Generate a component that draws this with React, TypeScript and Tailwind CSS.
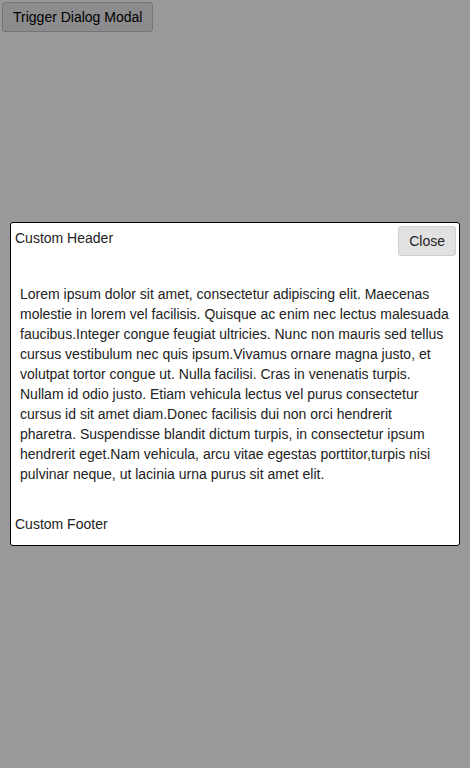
export default function App() {
  return (
    <div className="relative h-[768px] w-[470px] bg-white font-['Liberation_Sans',Arial,sans-serif] text-[14px] text-[#222]">
      <button className="m-[2px] h-[30px] rounded-[3px] border border-[#c4c4c4] bg-[#e9e9ed] px-[10px] text-[14px] text-black">
        Trigger Dialog Modal
      </button>

      {/* overlay */}
      <div className="fixed inset-0 flex items-center justify-center bg-black/40">
        <div className="flex w-[450px] flex-col rounded-[3px] border border-black bg-white">
          <div className="flex items-start justify-between pb-[4px] pl-[4px] pr-[3px] pt-[3px] leading-[20px]">
            <span className="pt-[2px]">Custom Header</span>
            <button className="h-[30px] rounded-[3px] border border-[#cfcfcf] bg-[#e1e1e1] px-[10px] text-[14px] text-[#222]">
              Close
            </button>
          </div>
          <p className="mt-[24px] px-[9px] text-[14px] leading-[20px]">
            Lorem ipsum dolor sit amet, consectetur adipiscing elit. Maecenas molestie in lorem vel facilisis. Quisque ac enim nec lectus malesuada faucibus.Integer congue feugiat ultricies. Nunc non mauris sed tellus cursus vestibulum nec quis ipsum.Vivamus ornare magna justo, et volutpat tortor congue ut. Nulla facilisi. Cras in venenatis turpis. Nullam id odio justo. Etiam vehicula lectus vel purus consectetur cursus id sit amet diam.Donec facilisis dui non orci hendrerit pharetra. Suspendisse blandit dictum turpis, in consectetur ipsum hendrerit eget.Nam vehicula, arcu vitae egestas porttitor,turpis nisi pulvinar neque, ut lacinia urna purus sit amet elit.
          </p>
          <div className="mt-[30px] px-[4px] pb-[11px] leading-[20px]">Custom Footer</div>
        </div>
      </div>
    </div>
  );
}
